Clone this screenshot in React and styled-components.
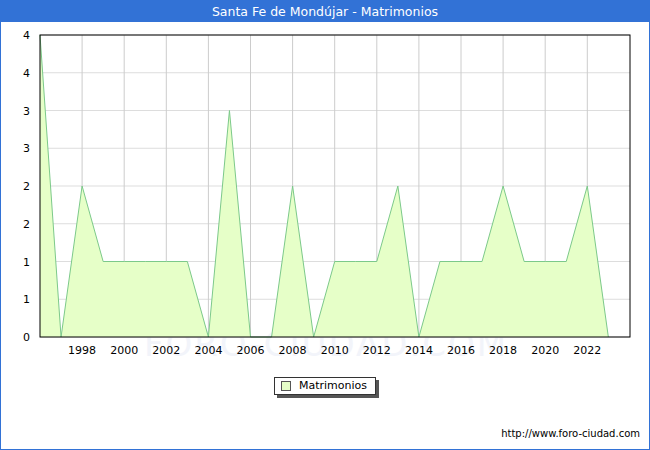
import React from "react";
import styled, { createGlobalStyle } from "styled-components";

const Global = createGlobalStyle`
  html, body { margin: 0; padding: 0; background: #fff; }
  body { font-family: "DejaVu Sans", sans-serif; }
`;

const Frame = styled.div`
  width: 650px; height: 450px; box-sizing: border-box;
  border: 1px solid #3272d6; border-top: none;
  display: flex; flex-direction: column; background: #fff;
`;
const TitleBar = styled.div`
  height: 22px; background: #3272d6; color: #fff;
  font-size: 12.5px; display: flex; align-items: center; justify-content: center;
  margin: 0 -1px;
`;
const ChartSvg = styled.svg`display: block;`;
const LegendRow = styled.div`
  display: flex; justify-content: center; margin-top: 20px;
`;
const Legend = styled.div`
  display: flex; align-items: center; gap: 8px;
  border: 1px solid #333; box-shadow: 3px 3px 0 #555;
  padding: 1px 8px 2px 6px; font-size: 11px; color: #000; background: #fff;
`;
const Swatch = styled.span`
  width: 8px; height: 8px; border: 1px solid #555; background: #e6ffc8;
`;
const Footer = styled.div`
  margin-top: auto; margin-bottom: 10px; align-self: flex-end; margin-right: 9px;
  font-size: 10px; color: #000;
`;

const data = [4,0,2,1,1,1,1,1,0,3,0,0,2,0,1,1,1,2,0,1,1,1,2,1,1,1,2,0];
const X0 = 39, YB = 315, YT = 13, X1 = 629;
const dx = 21.05;
const yv = v => YB - v * (YB - YT) / 4;
const xv = i => X0 + i * dx;

export default function App() {
  const pts = data.map((v, i) => `${xv(i)},${yv(v)}`).join(" ");
  const area = `${xv(0)},${YB} ${pts} ${xv(data.length - 1)},${YB}`;
  const hLines = Array.from({ length: 9 }, (_, k) => YB - k * (YB - YT) / 8);
  const yLabels = ["0","1","1","2","2","3","3","4","4"];
  const years = [];
  for (let y = 1998; y <= 2022; y += 2) years.push(y);
  return (
    <>
      <Global />
      <Frame>
        <TitleBar>Santa Fe de Mondújar - Matrimonios</TitleBar>
        <ChartSvg width="648" height="335">
          <text x="325" y="334" textAnchor="middle" fontSize="34" fill="#f2f4fa" fontFamily="DejaVu Sans" letterSpacing="2">FORO-CIUDAD.COM</text>
          {hLines.map((y, k) => <line key={k} x1={X0} x2={X1} y1={y} y2={y} stroke="#ddd" />)}
          {years.map((yr) => { const x = xv(yr - 1996); return <line key={yr} x1={x} x2={x} y1={YT} y2={YB} stroke="#ccc" />; })}
          <polygon points={area} fill="#e6ffc8" />
          <polyline points={pts} fill="none" stroke="#7cc98a" strokeWidth="1" />
          <rect x={X0} y={YT} width={X1 - X0} height={YB - YT} fill="none" stroke="#000" />
          {hLines.map((y, k) => <text key={k} x="29" y={y + 4} textAnchor="end" fontSize="11" fontFamily="DejaVu Sans">{yLabels[k]}</text>)}
          {years.map((yr) => <text key={yr} x={xv(yr - 1996)} y="332" textAnchor="middle" fontSize="11" fontFamily="DejaVu Sans">{yr}</text>)}
        </ChartSvg>
        <LegendRow>
          <Legend><Swatch />Matrimonios</Legend>
        </LegendRow>
        <Footer>http://www.foro-ciudad.com</Footer>
      </Frame>
    </>
  );
}
